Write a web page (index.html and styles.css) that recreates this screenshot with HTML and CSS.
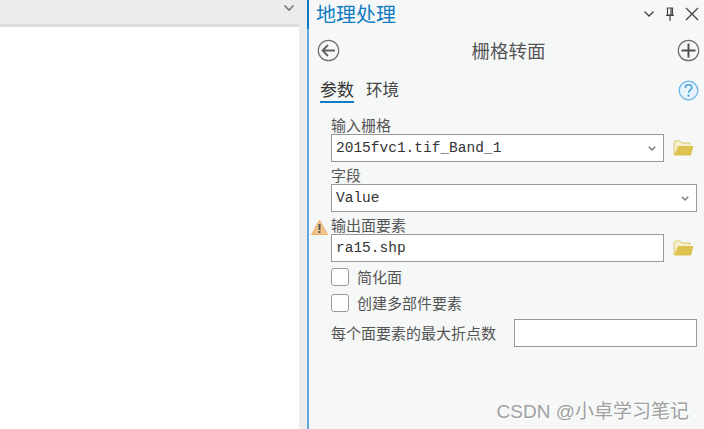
FILE: index.html
```html
<!DOCTYPE html>
<html lang="zh">
  <head>
    <meta charset="UTF-8" />
    <title>地理处理</title>
    <link rel="stylesheet" href="styles.css">
  </head>
  <body>
    <div class="app">
      <div class="map-pane">
        <div class="tab-bar">
          <svg class="tab-arrow" width="12" height="8" viewBox="0 0 12 8"><path d="M1.500 1.500 6 6l4.500-4.500" fill="none" stroke="#777" stroke-width="1.600"/></svg>
        </div>
        <div class="map-view"></div>
      </div>

      <div class="gp-pane">
        <div class="gp-title">
          <h1>地理处理</h1>
          <div class="win-btns">
            <svg width="12" height="8" viewBox="0 0 12 8"><path d="M1.500 1.500 6 6l4.500-4.500" fill="none" stroke="#444" stroke-width="1.300"/></svg>
            <svg width="10" height="14" viewBox="0 0 10 14"><path d="M2.500 1h5v7h-5zM1 8.500h8M5 9v5M6 1v7" fill="none" stroke="#444" stroke-width="1.200"/></svg>
            <svg width="14" height="14" viewBox="0 0 14 14"><path d="M1 1l12 12M13 1 1 13" fill="none" stroke="#444" stroke-width="1.300"/></svg>
          </div>
        </div>

        <div class="gp-tool">
          <svg width="23" height="23" viewBox="0 0 23 23"><circle cx="11.500" cy="11.500" r="10.200" fill="none" stroke="#707070" stroke-width="1.200"/><path d="M18 11.500H6M11 6l-5.500 5.500L11 17" fill="none" stroke="#606060" stroke-width="1.800"/></svg>
          <h2>栅格转面</h2>
          <svg width="23" height="23" viewBox="0 0 23 23"><circle cx="11.500" cy="11.500" r="10.200" fill="none" stroke="#707070" stroke-width="1.200"/><path d="M11.500 4.500v14M4.500 11.500h14" fill="none" stroke="#505050" stroke-width="2"/></svg>
        </div>

        <div class="gp-tabs">
          <span class="tab active">参数</span>
          <span class="tab">环境</span>
          <svg class="help" width="21" height="21" viewBox="0 0 21 21"><circle cx="10.500" cy="10.500" r="9.300" fill="#e8f3fb" stroke="#6db6e8" stroke-width="1.300"/><path d="M7.300 8c0-2 1.500-3.200 3.300-3.200s3.200 1.100 3.200 2.800c0 2.600-3.200 2.500-3.200 5.200" fill="none" stroke="#4ba3e0" stroke-width="1.600"/><circle cx="10.500" cy="15.700" r="1.100" fill="#4ba3e0"/></svg>
        </div>

        <div class="form">
          <div class="field">
            <label>输入栅格</label>
            <div class="row">
              <div class="input"><span>2015fvc1.tif_Band_1</span><svg class="caret" width="8" height="5" viewBox="0 0 8 5"><path d="M.8.8 4 4 7.200.8" fill="none" stroke="#777" stroke-width="1.400"/></svg></div>
              <svg class="folder" width="21" height="16" viewBox="0 0 21 16"><path d="M1 15V2.500L2 1h5l1.500 2H17v2" fill="#f5efd0" stroke="#dcc868"/><path d="M1 15.500 5 6h15.500L18 15.500z" fill="#dcc350"/></svg>
            </div>
          </div>
          <div class="field">
            <label>字段</label>
            <div class="row">
              <div class="input"><span>Value</span><svg class="caret" width="8" height="5" viewBox="0 0 8 5"><path d="M.8.8 4 4 7.200.8" fill="none" stroke="#777" stroke-width="1.400"/></svg></div>
            </div>
          </div>
          <div class="field">
            <label>输出面要素</label>
            <svg class="warn" width="17" height="16" viewBox="0 0 17 16"><path d="M8.500 1 16.500 15.500H.5z" fill="#f2c48c" stroke="#eeb070"/><path d="M7.500 5h2v6h-2zM7.500 12h2v2h-2z" fill="#555"/></svg>
            <div class="row">
              <div class="input"><span>ra15.shp</span></div>
              <svg class="folder" width="21" height="16" viewBox="0 0 21 16"><path d="M1 15V2.500L2 1h5l1.500 2H17v2" fill="#f5efd0" stroke="#dcc868"/><path d="M1 15.500 5 6h15.500L18 15.500z" fill="#dcc350"/></svg>
            </div>
          </div>
          <div class="checks">
            <div class="check"><span class="box"></span><span class="check-text">简化面</span></div>
            <div class="check"><span class="box"></span><span class="check-text">创建多部件要素</span></div>
          </div>
          <div class="vertex">
            <label>每个面要素的最大折点数</label>
            <div class="input"></div>
          </div>
        </div>

        <div class="watermark">CSDN @小卓学习笔记</div>
      </div>
    </div>
  </body>
</html>
```

FILE: styles.css
```css
* {
  box-sizing: border-box;
}

html,
body {
  margin: 0;
  height: 100%;
  overflow: hidden;
}

body {
  font-family: "Noto Sans CJK SC", "Liberation Sans", sans-serif;
  color: #444;
}

.app {
  display: flex;
  width: 704px;
  height: 429px;
  background-color: #ececec;
}

.map-pane {
  width: 299px;
  flex: none;
}

.tab-bar {
  height: 27px;
  display: flex;
  justify-content: flex-end;
  align-items: center;
  padding: 0 4px 8px 0;
  border-bottom: 3px solid #dedede;
}

.map-view {
  height: 402px;
  background-color: #fff;
}

.gp-pane {
  position: relative;
  margin-left: 8px;
  flex: 1;
  background-color: #f6f8f8;
  border-left: 2px solid;
  border-image: linear-gradient(#0f78c0 30px, #5fa9de 30px) 1;
}

.gp-title {
  height: 30px;
  display: flex;
  justify-content: space-between;
  align-items: center;
  padding: 0 5px 2px 7px;
}

h1 {
  margin: 0;
  font-size: 20px;
  line-height: 28px;
  font-weight: 400;
  color: #0f7cc4;
}

.win-btns {
  display: flex;
  align-items: center;
  gap: 10px;
}

.gp-tool {
  height: 41px;
  display: flex;
  justify-content: space-between;
  align-items: center;
  padding: 0 4px 0 8px;
}

h2 {
  margin: 0 0 2px;
  font-size: 18.500px;
  line-height: 26px;
  font-weight: 400;
  color: #555;
}

.gp-tabs {
  height: 34px;
  display: flex;
  align-items: flex-start;
  gap: 12px;
  padding: 6px 5px 0 11px;
}

.tab {
  font-size: 16.500px;
  line-height: 24px;
}

.tab.active {
  font-size: 17px;
  color: #333;
  border-bottom: 2px solid #0f7cc4;
  height: 26px;
}

.help {
  margin-left: auto;
  margin-top: 3px;
}

.form {
  padding: 7px 7px 0 22px;
}

.field {
  position: relative;
}

label {
  display: block;
  padding-top: 4px;
  font-size: 15px;
  line-height: 18px;
  color: #555;
}

.row {
  display: flex;
  align-items: center;
  gap: 9px;
}

.input {
  flex: 1;
  height: 28px;
  display: flex;
  justify-content: space-between;
  align-items: center;
  padding: 0 7px 0 4px;
  background-color: #fff;
  border: 1px solid #999;
  font-family: "Liberation Mono", "DejaVu Sans Mono", monospace;
  font-size: 14.500px;
  color: #333;
}

.folder {
  flex: none;
  margin-right: 3px;
}

.warn {
  position: absolute;
  left: -20px;
  top: 7px;
}

.checks {
  padding-top: 2px;
}

.check {
  display: flex;
  align-items: center;
  gap: 8px;
  height: 26px;
  font-size: 15px;
  color: #555;
}

.check-text {
  margin-top: -2px;
}

.box {
  width: 18px;
  height: 18px;
  background-color: #fff;
  border: 1px solid #999;
  border-radius: 3px;
}

.vertex {
  display: flex;
  align-items: center;
  gap: 18px;
  margin-top: 3px;
}

.vertex label {
  padding-top: 0;
}

.watermark {
  position: absolute;
  right: 15px;
  bottom: 6px;
  font-family: "Liberation Sans", "Noto Sans CJK SC", sans-serif;
  font-size: 19px;
  color: #a0a0a0;
  text-shadow: 1px 1px 1px #fff;
}
```
